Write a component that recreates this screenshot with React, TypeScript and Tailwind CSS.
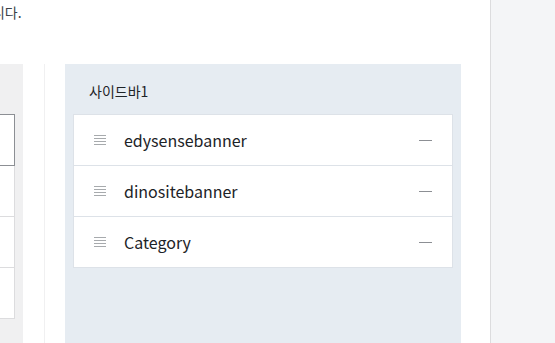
const widgets = ["edysensebanner", "dinositebanner", "Category"];

const DragHandle = () => (
    <svg width="12" height="11" viewBox="0 0 12 11" className="shrink-0">
        <rect x="0" y="0" width="12" height="1" fill="#a7aaad" />
        <rect x="0" y="3" width="12" height="1" fill="#a7aaad" />
        <rect x="0" y="6" width="12" height="1" fill="#a7aaad" />
        <rect x="0" y="9" width="12" height="1" fill="#a7aaad" />
    </svg>
);

const App = () => {
    return (
        <div
            className="w-[555px] h-[343px] overflow-hidden flex bg-white"
            style={{ fontFamily: '"Noto Sans CJK KR", "Noto Sans", sans-serif' }}
        >
            <div className="w-[490px] shrink-0 flex flex-col overflow-hidden">
                <p className="h-[64px] shrink-0 pt-[1px] text-[14px] leading-[22px] text-[#3c434a] whitespace-nowrap -ml-[21px]">
                    합니다.
                </p>
                <div className="flex flex-1">
                    <div className="w-[23px] shrink-0 bg-[#f0f0f1] pt-[50px]">
                        <div className="w-[15px] h-[52px] bg-white border border-l-0 border-[#8c8f94]" />
                        {[0, 1, 2].map((i) => (
                            <div key={i} className="w-[15px] h-[51px] bg-white border-r border-b border-[#dcdcde]" />
                        ))}
                    </div>
                    <div className="w-[21px] shrink-0" />
                    <div className="w-px shrink-0 bg-[#f0f0f1]" />
                    <div className="w-[20px] shrink-0" />
                    <div className="w-[396px] shrink-0 bg-[#e6ecf2] px-[8px]">
                        <h3 className="h-[50px] pl-[16px] pt-[16px] text-[14px] leading-[22px] text-[#1d2327]">
                            사이드바1
                        </h3>
                        <ul className="border-b border-[#dde2e8]">
                            {widgets.map((name) => (
                                <li
                                    key={name}
                                    className="h-[51px] bg-white border-t border-x border-[#dde2e8] flex items-center pl-[20px] pr-[20px]"
                                >
                                    <DragHandle />
                                    <span className="ml-[18px] text-[16px] text-[#1d2327] flex-1">{name}</span>
                                    <span className="w-[13px] h-px bg-[#8c8f94]" />
                                </li>
                            ))}
                        </ul>
                    </div>
                </div>
            </div>
            <div className="w-px shrink-0 bg-[#dcdcde]" />
            <div className="flex-1 bg-[#f4f5f7]" />
        </div>
    );
};

export default App;
